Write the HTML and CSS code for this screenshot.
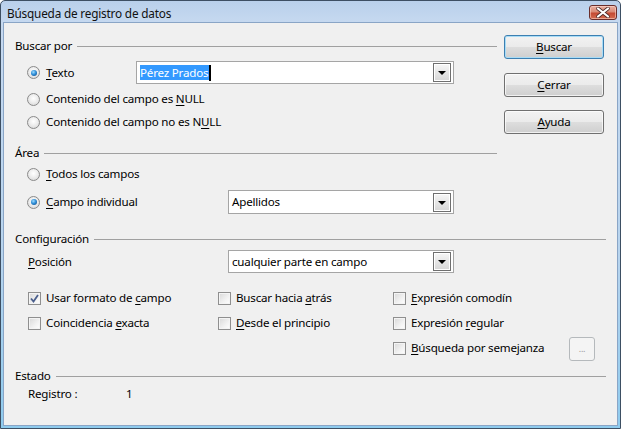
FILE: index.html
```html
<!DOCTYPE html>
<html lang="es">
<head>
<meta charset="utf-8">
<title>Búsqueda de registro de datos</title>
<link rel="stylesheet" href="styles.css">
</head>
<body>
<div class="window">
  <div class="titlebar">
    <span class="title">Búsqueda de registro de datos</span>
    <span class="close" aria-label="Cerrar">
      <svg width="14" height="11" viewBox="0 0 14 11">
        <path d="M2 1.5 L12 9.5 M12 1.5 L2 9.5" stroke="#4a2a28" stroke-width="3.6" stroke-linecap="round"/>
        <path d="M2 1.5 L12 9.5 M12 1.5 L2 9.5" stroke="#ffffff" stroke-width="2.2" stroke-linecap="round"/>
      </svg>
    </span>
  </div>
  <div class="client">
    <div class="top">
      <div class="left">
        <div class="group-head head-buscar"><span>Buscar por</span><i class="rule"></i></div>
        <div class="row row-texto">
          <span class="opt opt-texto"><span class="radio on"></span><span class="lbl"><u>T</u>exto</span></span>
          <div class="combo combo-texto">
            <span class="combo-val"><span class="sel">Pérez Prados</span><span class="caret"></span></span>
            <span class="drop"><i class="tri"></i></span>
          </div>
        </div>
        <div class="row row-null1">
          <span class="opt"><span class="radio"></span><span class="lbl">Contenido del campo es <u>N</u>ULL</span></span>
        </div>
        <div class="row row-null2">
          <span class="opt"><span class="radio"></span><span class="lbl">Contenido del campo no es N<u>U</u>LL</span></span>
        </div>

        <div class="group-head head-area"><span>Área</span><i class="rule"></i></div>
        <div class="row row-todos">
          <span class="opt"><span class="radio"></span><span class="lbl"><u>T</u>odos los campos</span></span>
        </div>
        <div class="row row-campo">
          <span class="opt opt-campo"><span class="radio on"></span><span class="lbl"><u>C</u>ampo individual</span></span>
          <div class="combo combo-short">
            <span class="combo-val">Apellidos</span>
            <span class="drop"><i class="tri"></i></span>
          </div>
        </div>
      </div>
      <div class="buttons">
        <span class="btn btn-default"><span class="lbl"><u>B</u>uscar</span></span>
        <span class="btn btn-cerrar"><span class="lbl"><u>C</u>errar</span></span>
        <span class="btn btn-ayuda"><span class="lbl"><u>A</u>yuda</span></span>
      </div>
    </div>

    <div class="group-head head-config"><span>Configuración</span><i class="rule"></i></div>
    <div class="row row-pos">
      <span class="pos-label"><u>P</u>osición</span>
      <div class="combo combo-short">
        <span class="combo-val">cualquier parte en campo</span>
        <span class="drop"><i class="tri"></i></span>
      </div>
    </div>
    <div class="checks">
      <span class="chk-item"><span class="check on"><svg width="9" height="9" viewBox="0 0 9 9"><path d="M1 4.5 L3.5 7.5 L8 1" fill="none" stroke="#4a5e8c" stroke-width="1.8"/></svg></span><span class="lbl">Usar formato de <u>c</u>ampo</span></span>
      <span class="chk-item"><span class="check"></span><span class="lbl">Buscar hacia <u>a</u>trás</span></span>
      <span class="chk-item"><span class="check"></span><span class="lbl"><u>E</u>xpresión comodín</span></span>

      <span class="chk-item"><span class="check"></span><span class="lbl">Coincidencia <u>e</u>xacta</span></span>
      <span class="chk-item"><span class="check"></span><span class="lbl"><u>D</u>esde el principio</span></span>
      <span class="chk-item"><span class="check"></span><span class="lbl">Expresión <u>r</u>egular</span></span>

      <span class="chk-item empty"></span>
      <span class="chk-item empty"></span>
      <span class="chk-item chk-last"><span class="chk-inner"><span class="check"></span><span class="lbl"><u>B</u>úsqueda por semejanza</span></span><span class="dots">...</span></span>
    </div>

    <div class="group-head head-estado"><span>Estado</span><i class="rule"></i></div>
    <div class="row row-reg">
      <span class="reg-label">Registro :</span>
      <span class="reg-val">1</span>
    </div>
  </div>
</div>
</body>
</html>
```

FILE: styles.css
```css
html, body {
  margin: 0;
  padding: 0;
  background: #ffffff;
}

body {
  font-family: "Noto Sans", "Open Sans", sans-serif;
  font-size: 12px;
  line-height: 16px;
  color: #000000;
}

u {
  text-decoration: underline;
  text-underline-offset: 2px;
}

.lbl {
  white-space: pre;
}

.window {
  width: 621px;
  height: 429px;
  box-sizing: border-box;
  border: 1px solid #3d4f63;
  border-radius: 5px 5px 0 0;
  background: linear-gradient(#b9d0eb 0, #c6d9f0 22px, #b7d4ee 60%, #8ecbee 100%);
  padding: 0 2px 2px;
  display: flex;
  flex-direction: column;
  overflow: hidden;
}

.titlebar {
  height: 21px;
  display: flex;
  align-items: flex-start;
  justify-content: space-between;
}

.title {
  padding-left: 4px;
  padding-top: 4px;
  font-size: 11.8px;
  letter-spacing: -0.2px;
  line-height: 16px;
  color: #111111;
}

.close {
  margin-top: 4px;
  margin-right: 1px;
  width: 28px;
  height: 15px;
  box-sizing: border-box;
  border: 1px solid #6a2e2b;
  border-radius: 3px;
  background: linear-gradient(#eab0a2 0, #d98b76 45%, #c44a33 55%, #d46c4f 100%);
  display: flex;
  align-items: center;
  justify-content: center;
  box-shadow: inset 0 0 0 1px rgba(255, 220, 210, 0.55);
}

.close svg {
  display: block;
}

.client {
  flex: 1;
  border: 1px solid #8aa5c6;
  background: #f0f0f0;
  padding: 15px 11px 0 11px;
  display: flex;
  flex-direction: column;
  font-size: 11.6px;
  letter-spacing: -0.2px;
}

.top {
  display: flex;
  align-items: flex-start;
}

.left {
  width: 480px;
  display: flex;
  flex-direction: column;
}

.buttons {
  margin-left: 9px;
  margin-top: -3px;
  width: 100px;
  display: flex;
  flex-direction: column;
}

.btn {
  height: 24px;
  box-sizing: border-box;
  border: 1px solid #707070;
  border-radius: 3px;
  background: linear-gradient(#f2f2f2 0, #ebebeb 48%, #dddddd 52%, #cfcfcf 100%);
  box-shadow: inset 0 0 0 1px rgba(255, 255, 255, 0.7);
  display: flex;
  align-items: center;
  justify-content: center;
}

.btn-default {
  border-color: #3c7fb1;
  box-shadow: inset 0 0 0 1px #a8dcf6;
}

.btn-cerrar {
  margin-top: 14px;
}

.btn-ayuda {
  margin-top: 13px;
}

.group-head {
  height: 16px;
  display: flex;
  align-items: center;
}

.group-head .rule {
  flex: 1;
  height: 0;
  border-top: 1px solid #a0a0a0;
  margin-left: 5px;
  margin-top: 1px;
}

.head-buscar .rule {
  margin-right: -2px;
}

.head-area {
  margin-top: 15px;
}

.head-area .rule {
  margin-right: -2px;
}

.head-config {
  margin-top: 17px;
}

.head-estado {
  margin-top: 12px;
}

.row {
  display: flex;
  align-items: center;
  height: 16px;
}

.row-texto {
  height: 23px;
  margin-top: 7px;
}

.row-null1 {
  margin-top: 7px;
}

.row-null2 {
  margin-top: 7px;
}

.row-todos {
  margin-top: 5px;
}

.row-campo {
  height: 24px;
  margin-top: 8px;
}

.row-pos {
  height: 23px;
  margin-top: 3px;
}

.opt {
  display: flex;
  align-items: center;
  padding-left: 12px;
  white-space: nowrap;
}

.opt-texto {
  width: 109px;
}

.opt-campo {
  width: 201px;
}

.radio {
  width: 13px;
  height: 13px;
  box-sizing: border-box;
  border-radius: 50%;
  border: 1px solid #8a8a8a;
  background: radial-gradient(circle at 50% 40%, #ffffff 0, #eeeeee 45%, #d2d2d2 100%);
  margin-right: 6px;
  display: flex;
  align-items: center;
  justify-content: center;
  flex: none;
}

.radio.on::after {
  content: "";
  width: 6px;
  height: 6px;
  border-radius: 50%;
  background: radial-gradient(circle at 40% 35%, #9fdcff 0, #2f8fd8 45%, #0c3f7a 100%);
  display: block;
}

.combo {
  height: 23px;
  box-sizing: border-box;
  border: 1px solid #a5a5a5;
  background: #ffffff;
  display: flex;
  align-items: center;
  padding: 0 2px 0 3px;
}

.combo-texto {
  width: 318px;
}

.combo-short {
  width: 226px;
}

.row-campo .combo {
  height: 24px;
}

.combo-val {
  flex: 1;
  display: flex;
  align-items: center;
  white-space: pre;
}

.sel {
  background: #3399ff;
  color: #ffffff;
  line-height: 15px;
  padding-right: 1px;
}

.caret {
  width: 2px;
  height: 16px;
  background: #000000;
}

.drop {
  width: 18px;
  height: 19px;
  box-sizing: border-box;
  border: 1px solid #6f6f6f;
  background: linear-gradient(#f6f6f6 0, #e6e6e6 50%, #d6d6d6 100%);
  box-shadow: inset 0 0 0 1px #ffffff;
  display: flex;
  align-items: center;
  justify-content: center;
  flex: none;
}

.tri {
  width: 0;
  height: 0;
  border-left: 4px solid transparent;
  border-right: 4px solid transparent;
  border-top: 4px solid #000000;
  margin-top: 1px;
}

.pos-label {
  padding-left: 13px;
  width: 200px;
}

.checks {
  margin-top: 17px;
  display: grid;
  grid-template-columns: 203px 175px 213px;
  grid-auto-rows: 16px;
  row-gap: 9px;
}

.chk-item {
  display: flex;
  align-items: center;
  padding-left: 13px;
  white-space: nowrap;
}

.chk-item:nth-child(3n+2),
.chk-item:nth-child(3n) {
  padding-left: 0;
}

.check {
  width: 13px;
  height: 13px;
  box-sizing: border-box;
  border: 1px solid #8f8f8f;
  background: linear-gradient(135deg, #d8d8d8 0, #f2f2f2 60%, #ffffff 100%);
  box-shadow: inset 0 0 0 1px #f4f4f4;
  margin-right: 5px;
  display: flex;
  align-items: center;
  justify-content: center;
  flex: none;
}

.check svg {
  display: block;
}

.chk-last {
  justify-content: space-between;
}

.chk-inner {
  display: flex;
  align-items: center;
}

.dots {
  width: 26px;
  height: 24px;
  box-sizing: border-box;
  border: 1px solid #b5b9bc;
  border-radius: 3px;
  background: #f4f4f4;
  color: #9a9a9a;
  font-size: 9px;
  line-height: 10px;
  display: flex;
  align-items: flex-end;
  justify-content: center;
  padding-bottom: 6px;
  margin-right: 11px;
  margin-top: 1px;
}

.row-reg {
  margin-top: 2px;
}

.reg-label {
  padding-left: 13px;
  width: 98px;
}
```
